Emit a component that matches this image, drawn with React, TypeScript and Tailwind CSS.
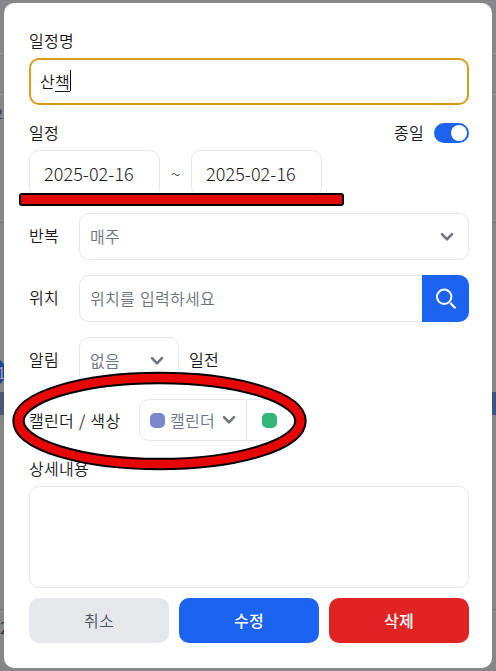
import { useState } from 'react'
import type { JSX, ReactNode } from 'react'

function Chevron({ className = '' }: { className?: string }): JSX.Element {
  return (
    <svg
      viewBox="0 0 14 10"
      fill="none"
      stroke="#71757c"
      strokeWidth="2.6"
      strokeLinecap="round"
      strokeLinejoin="round"
      className={`h-2.5 w-3.5 shrink-0 ${className}`}
    >
      <path d="M2 2.2 7 7.4 12 2.2" />
    </svg>
  )
}

function Row({ label, children }: { label: string; children: ReactNode }): JSX.Element {
  return (
    <div className="mb-[15px] flex h-[47px] items-center">
      <span className="w-[50px] shrink-0 pb-[3px]">{label}</span>
      {children}
    </div>
  )
}

// The calendar grid that stays visible around the dialog
function CalendarBackdrop(): JSX.Element {
  return (
    <div className="absolute inset-0 overflow-hidden bg-[#87878a]">
      <div className="absolute left-0 top-[53px] h-px w-full bg-[#98989b]" />
      <div className="absolute left-0 top-[94px] h-px w-full bg-[#98989b]" />
      <div className="absolute left-0 top-[222px] h-px w-full bg-[#77777a]" />
      <span className="absolute -left-[5px] top-[103px] text-sm text-[#333336]">2</span>
      <div className="absolute -left-[24px] top-[357px] h-[30px] w-[30px] rounded-full bg-[#1d459b]" />
      <span className="absolute -left-[3px] top-[362px] text-base leading-5 text-[#a9adb8]">1</span>
      <div className="absolute left-0 top-[392px] h-[23px] w-full bg-[#4c5577]" />
      <div className="absolute right-0 top-[392px] h-[23px] w-1 bg-[#3c5684]" />
      <div className="absolute left-0 top-[609px] h-px w-full bg-[#77777a]" />
      <span className="absolute left-0 top-[615px] text-base text-[#333336]">2</span>
    </div>
  )
}

// Red markers laid over the form to point at the date and calendar rows
function Markers(): JSX.Element {
  return (
    <>
      <div className="pointer-events-none absolute left-[19px] top-[193px] h-[13px] w-[325px] rounded-[3px] border-2 border-black bg-[#df0b0b]" />
      <svg
        viewBox="0 0 300 104"
        fill="none"
        className="pointer-events-none absolute left-[10px] top-[370px] h-[104px] w-[300px]"
      >
        <ellipse cx="149.5" cy="51" rx="141" ry="43" stroke="#000" strokeWidth="12.4" />
        <ellipse cx="149.5" cy="51" rx="141" ry="43" stroke="#e60606" strokeWidth="8.4" />
      </svg>
    </>
  )
}

export default function App(): JSX.Element {
  const [allDay, setAllDay] = useState(true)

  return (
    <div className="relative h-[671px] w-[496px] overflow-hidden px-1 pt-[3px] font-['Noto_Sans_CJK_KR',sans-serif] text-base font-[350] tracking-[0.3px] text-[#18181b] [word-spacing:1px]">
      <CalendarBackdrop />

      <div className="relative h-[665px] rounded-[10px] bg-white pl-[25px] pr-[23px] pt-[25px]">
        <p className="mb-1.5 h-6 leading-6">일정명</p>
        <div className="flex h-[47px] items-center rounded-[10px] border-2 border-[#d99c18] px-[9px] pb-0.5">
          <span>산</span>
          <span className="underline decoration-1 underline-offset-[3px]">책</span>
          <span className="h-[21px] w-px bg-black" />
        </div>

        <div className="mb-1.5 mt-[15px] flex h-6 items-center justify-between">
          <span>일정</span>
          <div className="flex items-center gap-2.5">
            <span>종일</span>
            <button
              type="button"
              role="switch"
              aria-checked={allDay}
              onClick={() => setAllDay(!allDay)}
              className={`mt-0.5 flex h-5 w-[35px] items-center rounded-full px-0.5 ${
                allDay ? 'justify-end bg-[#1d63ef]' : 'justify-start bg-gray-300'
              }`}
            >
              <span className="h-4 w-4 rounded-full bg-white" />
            </button>
          </div>
        </div>

        <div className="mb-4 flex h-[47px] items-center text-lg font-light tracking-[0.08px]">
          <div className="flex h-full w-[131px] items-center rounded-[10px] border border-gray-200 px-3.5 pb-0.5">
            2025-02-16
          </div>
          <span className="w-[31px] pb-0.5 text-center">~</span>
          <div className="flex h-full w-[131px] items-center rounded-[10px] border border-gray-200 px-3.5 pb-0.5">
            2025-02-16
          </div>
        </div>

        <Row label="반복">
          <div className="flex h-full flex-1 items-center justify-between rounded-[10px] border border-gray-200 px-2.5 pr-3.5 text-gray-500">
            <span className="pb-0.5">매주</span>
            <Chevron />
          </div>
        </Row>

        <Row label="위치">
          <div className="flex h-full flex-1 items-center rounded-l-[10px] border border-r-0 border-gray-200 px-2.5 pb-0.5 text-gray-500">
            위치를 입력하세요
          </div>
          <button
            type="button"
            className="flex h-full w-[47px] items-center justify-center rounded-r-[10px] bg-[#1c63f2]"
          >
            <svg viewBox="0 0 24 24" fill="none" stroke="#fff" strokeWidth="2" className="h-6 w-6">
              <circle cx="10.2" cy="9.8" r="7.2" />
              <path d="m16.3 16 5.2 5.2" strokeWidth="2.3" />
            </svg>
          </button>
        </Row>

        <Row label="알림">
          <div className="flex h-full w-[100px] items-center justify-between rounded-[10px] border border-gray-200 pl-2.5 pr-3.5 text-gray-500">
            <span className="pb-px">없음</span>
            <Chevron />
          </div>
          <span className="ml-2.5 pb-[3px]">일전</span>
        </Row>

        <div className="flex h-[42px] items-center">
          <span className="w-[110px] shrink-0 whitespace-nowrap">캘린더 / 색상</span>
          <div className="flex h-full w-[155px] rounded-[10px] border border-gray-200">
            <div className="flex w-[107px] items-center border-r border-gray-200 pl-2.5 text-gray-500">
              <span className="mr-[5px] h-[15px] w-[15px] shrink-0 rounded-[5px] bg-[#7b89cb]" />
              캘린더
              <Chevron className="ml-[7px]" />
            </div>
            <div className="flex flex-1 items-center justify-center pr-0.5">
              <span className="h-[15px] w-[15px] rounded-[5px] bg-[#33b679]" />
            </div>
          </div>
        </div>

        <p className="mb-1.5 mt-[15px] h-6 leading-6">상세내용</p>
        <div className="mb-2.5 h-[102px] rounded-[10px] border border-gray-200" />

        <div className="flex h-[45px] gap-2.5">
          <button type="button" className="flex-1 rounded-[10px] bg-gray-200 pb-0.5 text-gray-600">
            취소
          </button>
          <button type="button" className="flex-1 rounded-[10px] bg-[#1c63f2] pb-0.5 font-medium text-white">
            수정
          </button>
          <button type="button" className="flex-1 rounded-[10px] bg-[#e02424] pb-0.5 font-medium text-white">
            삭제
          </button>
        </div>
      </div>

      <Markers />
    </div>
  )
}
